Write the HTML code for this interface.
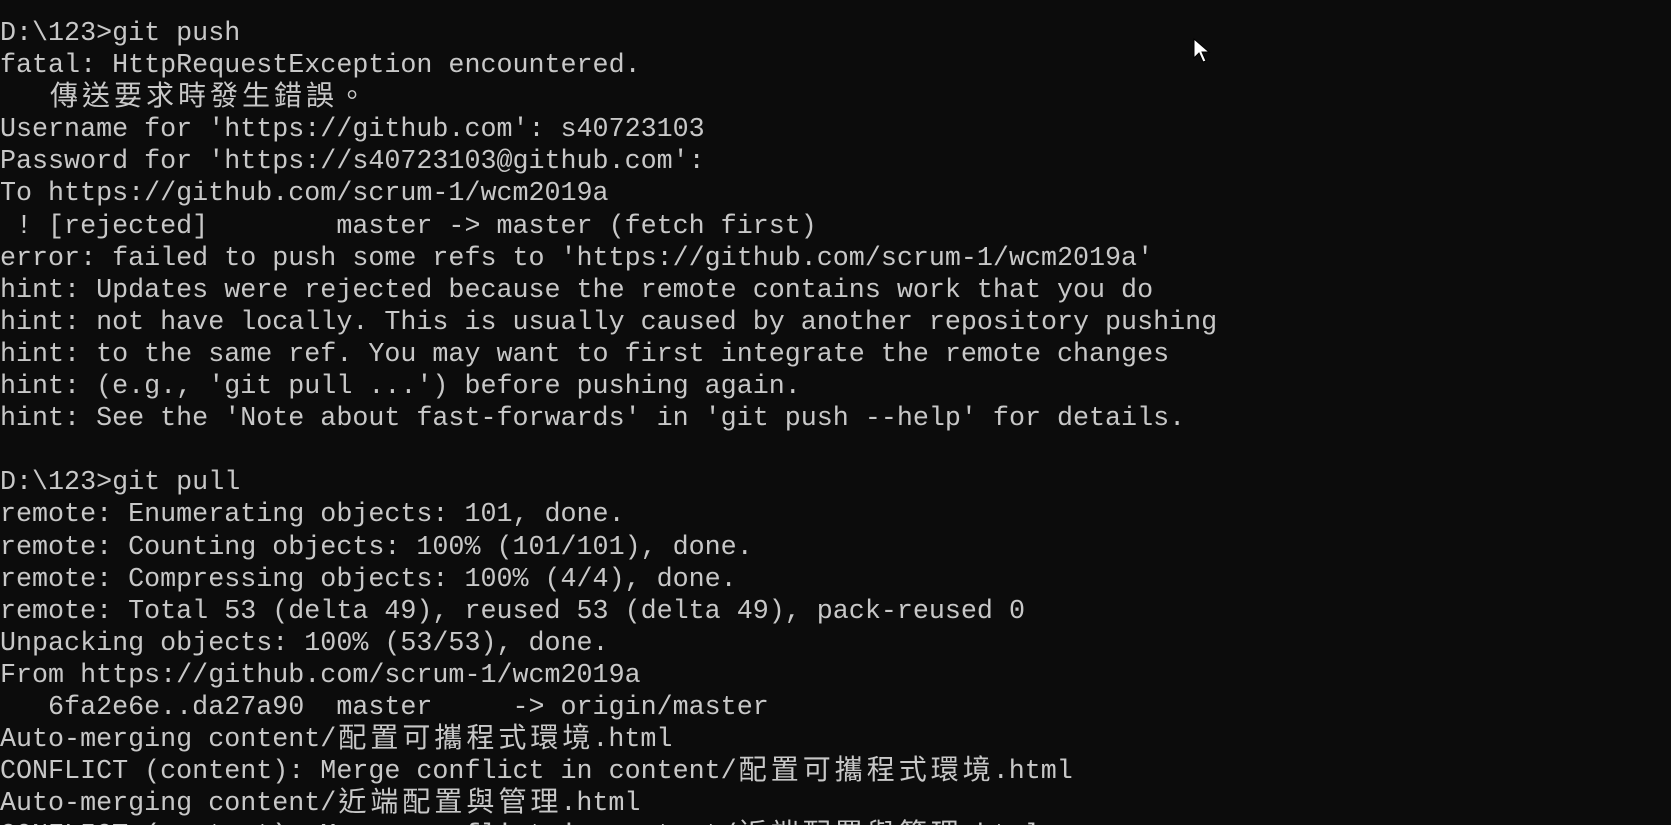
<!DOCTYPE html>
<html><head><meta charset="utf-8"><style>
html,body{margin:0;padding:0;background:#0c0c0c;width:1671px;height:825px;overflow:hidden}
pre{margin:0;padding:18px 0 0 0;font-family:"Liberation Mono","Noto Sans CJK TC",monospace;font-size:26.7px;line-height:32.1px;color:#c8c8c8;white-space:pre}
.c{display:inline-block;width:32px;text-align:center;font-family:"Noto Sans CJK TC",sans-serif;font-size:28px;line-height:32px;vertical-align:top;position:relative;top:-4px}
svg{position:absolute;left:1193px;top:38px}
</style></head><body>
<pre>D:\123&gt;git push
fatal: HttpRequestException encountered.
   <span class="c">傳</span><span class="c">送</span><span class="c">要</span><span class="c">求</span><span class="c">時</span><span class="c">發</span><span class="c">生</span><span class="c">錯</span><span class="c">誤</span><span class="c">。</span>
Username for 'https://github.com': s40723103
Password for 'https://s40723103@github.com':
To https://github.com/scrum-1/wcm2019a
 ! [rejected]        master -&gt; master (fetch first)
error: failed to push some refs to 'https://github.com/scrum-1/wcm2019a'
hint: Updates were rejected because the remote contains work that you do
hint: not have locally. This is usually caused by another repository pushing
hint: to the same ref. You may want to first integrate the remote changes
hint: (e.g., 'git pull ...') before pushing again.
hint: See the 'Note about fast-forwards' in 'git push --help' for details.

D:\123&gt;git pull
remote: Enumerating objects: 101, done.
remote: Counting objects: 100% (101/101), done.
remote: Compressing objects: 100% (4/4), done.
remote: Total 53 (delta 49), reused 53 (delta 49), pack-reused 0
Unpacking objects: 100% (53/53), done.
From https://github.com/scrum-1/wcm2019a
   6fa2e6e..da27a90  master     -&gt; origin/master
Auto-merging content/<span class="c">配</span><span class="c">置</span><span class="c">可</span><span class="c">攜</span><span class="c">程</span><span class="c">式</span><span class="c">環</span><span class="c">境</span>.html
CONFLICT (content): Merge conflict in content/<span class="c">配</span><span class="c">置</span><span class="c">可</span><span class="c">攜</span><span class="c">程</span><span class="c">式</span><span class="c">環</span><span class="c">境</span>.html
Auto-merging content/<span class="c">近</span><span class="c">端</span><span class="c">配</span><span class="c">置</span><span class="c">與</span><span class="c">管</span><span class="c">理</span>.html
CONFLICT (content): Merge conflict in content/<span class="c">近</span><span class="c">端</span><span class="c">配</span><span class="c">置</span><span class="c">與</span><span class="c">管</span><span class="c">理</span>.html</pre>
<svg width="20" height="28" viewBox="0 0 20 28"><path d="M1 1 L1 20 L6 15 L10 24 L13 23 L9 14 L16 14 Z" fill="#fff" stroke="#000" stroke-width="1"/></svg>
</body></html>
